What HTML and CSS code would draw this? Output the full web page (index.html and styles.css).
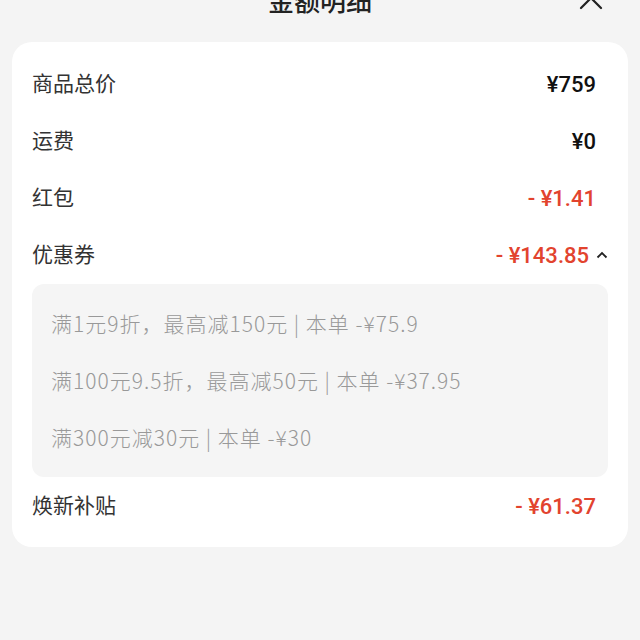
FILE: index.html
```html
<!DOCTYPE html>
<html>
    <head>
        <title>金额明细</title>
        <meta charset="UTF-8">
        <meta name="viewport" content="width=device-width, initial-scale=1.0">
        <link rel="stylesheet" href="styles.css">
    </head>
    <body>
        <header class="sheet-head">
            <span></span>
            <h1 class="sheet-title">金额明细</h1>
            <svg class="close-icon" width="24" height="24" viewBox="0 0 24 24">
                <path d="M2 2 L22 22 M22 2 L2 22" stroke="#222" stroke-width="2.2" fill="none" stroke-linecap="round"/>
            </svg>
        </header>
        <div class="card">
            <div class="row">
                <span class="label">商品总价</span>
                <span class="value">¥759</span>
            </div>
            <div class="row">
                <span class="label">运费</span>
                <span class="value">¥0</span>
            </div>
            <div class="row">
                <span class="label">红包</span>
                <span class="value red">- ¥1.41</span>
            </div>
            <div class="row row-open">
                <span class="label">优惠券</span>
                <span class="value red">- ¥143.85
                    <svg class="caret" width="12" height="8" viewBox="0 0 12 8">
                        <path d="M1.5 6.5 L6 2 L10.5 6.5" stroke="#222" stroke-width="1.8" fill="none"/>
                    </svg>
                </span>
            </div>
            <div class="coupons">
                <div class="coupon">满1元9折，最高减150元 | 本单 -¥75.9</div>
                <div class="coupon">满100元9.5折，最高减50元 | 本单 -¥37.95</div>
                <div class="coupon">满300元减30元 | 本单 -¥30</div>
            </div>
            <div class="row row-last">
                <span class="label">焕新补贴</span>
                <span class="value red">- ¥61.37</span>
            </div>
        </div>
    </body>
</html>
```

FILE: styles.css
```css
body{
    margin: 0;
    background-color: #f4f4f4;
    font-family: "Noto Sans CJK SC", "Noto Sans", sans-serif;
}
.sheet-head{
    height: 42px;
    display: grid;
    grid-template-columns: 1fr auto 1fr;
    align-items: start;
    overflow: hidden;
}
.sheet-title{
    margin: -13px 0 0 0;
    font-size: 26px;
    line-height: 26px;
    font-weight: 500;
    color: #222;
}
.close-icon{
    justify-self: end;
    margin: -14px 37px 0 0;
}
.card{
    background-color: white;
    margin: 0 12px;
    border-radius: 20px;
    padding: 14px 20px 12px;
}
.row{
    height: 57px;
    display: flex;
    justify-content: space-between;
    align-items: center;
    padding-right: 12px;
}
.row-open{
    padding-right: 0;
}
.row-last{
    margin-top: 1px;
}
.label{
    font-size: 21px;
    color: #333;
    margin-bottom: 5px;
}
.value{
    font-family: Roboto, "Liberation Sans", sans-serif;
    font-size: 22px;
    font-weight: 500;
    color: #111;
    display: flex;
    align-items: center;
}
.value.red{
    color: #e2432e;
}
.caret{
    margin-left: 7px;
    margin-bottom: 2px;
}
.coupons{
    background-color: #f5f5f5;
    border-radius: 12px;
    padding: 11px 19px;
}
.coupon{
    height: 57px;
    line-height: 57px;
    font-size: 21px;
    font-weight: 300;
    letter-spacing: 1px;
    color: #999;
}
```
